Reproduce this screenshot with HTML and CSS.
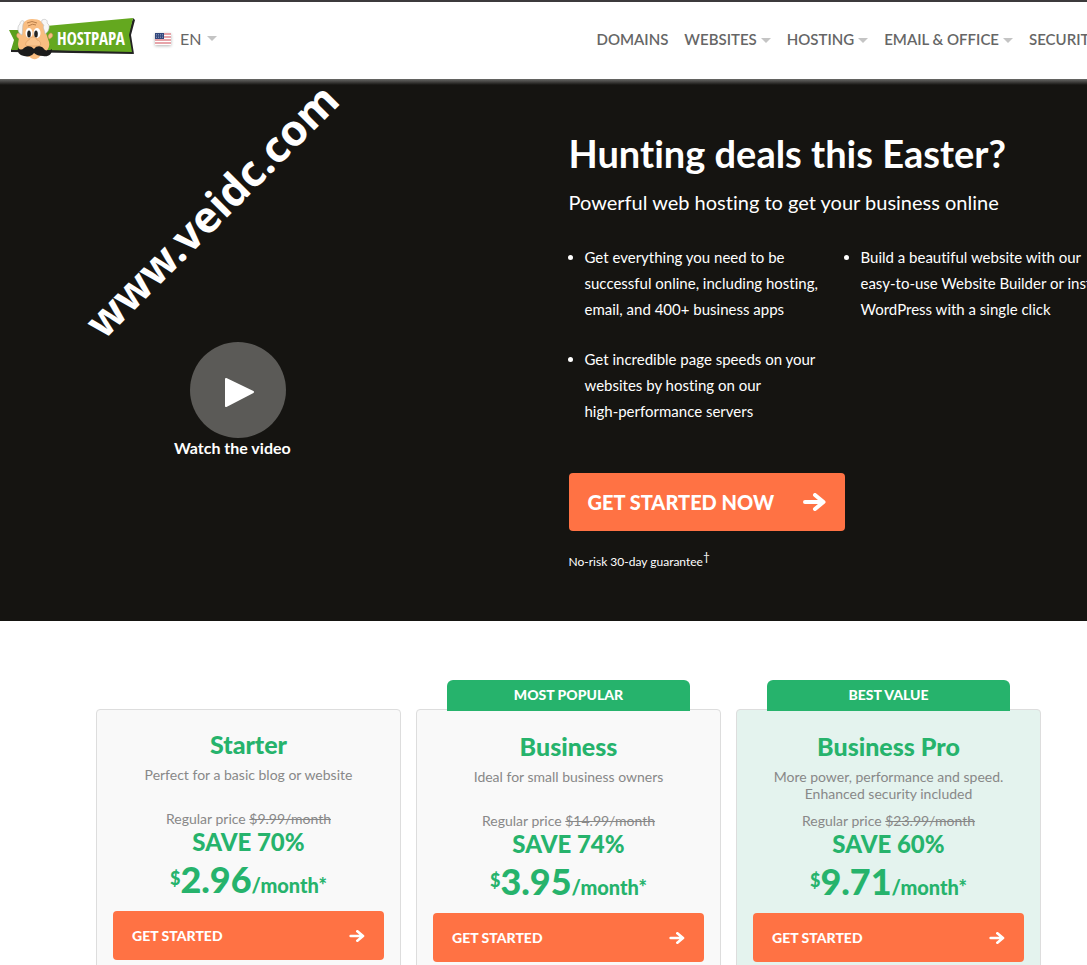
FILE: index.html
```html
<!DOCTYPE html>
<html lang="en">
<head>
    <meta charset="utf-8">
    <title>HostPapa</title>
    <link rel="stylesheet" href="styles.css">
</head>
<body>
    <header class="header">
        <a href="#" class="logo" aria-label="HostPapa">
            <svg width="128" height="44" viewBox="0 0 128 44">
                <!-- ribbon -->
                <polygon points="3,32 16,31 50,33 122,34 126,37 3,35" fill="#222"/>
                <polygon points="125,1 127,3 123,18 126,37 121,35 120,18" fill="#222"/>
                <polygon points="1,13 14,13 14,33 3,33 6,23" fill="#5c9f1c"/>
                <polygon points="38,9 125,1 121,18 124,35 38,33" fill="#64a81f"/>
                <text x="49" y="28" class="logo-text">HOSTPAPA</text>
                <!-- face -->
                <path d="M12 22c-4-1-4-5-2-6 1 0 2 1 3 3zM41 22c4-1 5-5 2-6-1 0-2 1-3 3z" fill="#f6bb83" stroke="#d08b52" stroke-width=".5"/>
                <path d="M12 14c1-8 6-12 12-12 8 0 12 3 13 11l4 12c2 7-6 13-9 14-2 4-8 4-10 1-6-1-12-7-12-13z" fill="#f9bd81"/>
                <path d="M14 18c-5-2-5-9-2-11 0-4 4-4 4-2-2 3-1 8-2 13zM34 3c4-2 6 1 5 3 4 2 2 9-2 11 0-4-3-6-1-9-2-1-3-3-2-5z" fill="#f7f7f7" stroke="#bbb" stroke-width=".6"/>
                <path d="M19 6q5-3 10 0M20 9q5-3 8-1" fill="none" stroke="#a96e3c" stroke-width=".8"/>
                <ellipse cx="21" cy="16" rx="3.500" ry="5" fill="#fff"/>
                <ellipse cx="29" cy="16" rx="3.500" ry="5" fill="#fff"/>
                <ellipse cx="21" cy="17" rx="1.800" ry="3.500" fill="#222"/>
                <ellipse cx="28" cy="17" rx="1.800" ry="3.500" fill="#222"/>
                <path d="M20 29c-5 0-1-6 1-6 1-4 7-4 8 0 3 0 6 6 1 6z" fill="#fbc58d" stroke="#d99a60" stroke-width=".6"/>
                <path d="M26 32c3-4 8-3 10 0 2 2 5 2 8 0 0 6-4 8-9 7-4 0-7-1-9-3-2 3-6 4-10 3-5-1-7-4-6-8 2 2 4 2 6 0 3-3 8-2 10 1z" fill="#1c1c1c"/>
            </svg>
        </a>
        <button class="lang">
            <svg class="flag" width="16" height="12" viewBox="0 0 16 12">
                <rect width="16" height="12" fill="#fff"/>
                <path d="M0 1h16M0 4h16M0 7h16M0 10h16" stroke="#cf4a55" stroke-width="1.200"/>
                <rect width="9" height="6" fill="#33487d"/>
                <path d="M1 1.500h7M1 3h7M1 4.500h7" stroke="#a9b4cf" stroke-width=".6" stroke-dasharray="1 1"/>
            </svg>
            EN
            <span class="caret"></span>
        </button>
        <nav class="nav">
            <a href="#">DOMAINS</a>
            <a href="#">WEBSITES<span class="caret"></span></a>
            <a href="#">HOSTING<span class="caret"></span></a>
            <a href="#">EMAIL &amp; OFFICE<span class="caret"></span></a>
            <a href="#">SECURITY<span class="caret"></span></a>
        </nav>
    </header>

    <section class="hero">
        <div class="watermark">www.veidc.com</div>
        <div class="hero-video">
            <button class="play">
                <svg width="96" height="96" viewBox="0 0 96 96">
                    <circle cx="48" cy="48" r="48" fill="#5b5a57"/>
                    <path d="M36 37L63 50 36 64z" fill="#fff" stroke="#fff" stroke-width="2" stroke-linejoin="round"/>
                </svg>
                <span>Watch the video</span>
            </button>
        </div>
        <div class="hero-content">
            <h1>Hunting deals this Easter?</h1>
            <p class="hero-sub">Powerful web hosting to get your business online</p>
            <ul class="hero-list">
                <li>Get everything you need to be successful online, including hosting, email, and 400+ business apps</li>
                <li>Build a beautiful website with our easy-to-use Website Builder or install WordPress with a single click</li>
                <li>Get incredible page speeds on your websites by hosting on our high&#8209;performance servers</li>
            </ul>
            <a href="#" class="btn btn-large">
                GET STARTED NOW
                <svg width="23" height="18" viewBox="0 0 23 18"><path d="M2 9h18M12 2l8.500 7-8.500 7" class="arrow"/></svg>
            </a>
            <p class="guarantee">No-risk 30-day guarantee<sup>†</sup></p>
        </div>
    </section>

    <section class="plans">
        <div class="plan">
            <h2>Starter</h2>
            <p class="plan-desc">Perfect for a basic blog or website</p>
            <p class="plan-regular">Regular price <s>$9.99/month</s></p>
            <p class="plan-save">SAVE 70%</p>
            <p class="plan-price"><span class="dollar">$</span><span class="amount">2.96</span>/month*</p>
            <a href="#" class="btn">
                GET STARTED
                <svg width="16" height="12" viewBox="0 0 23 18"><path d="M2 9h18M12 2l8.500 7-8.500 7" class="arrow"/></svg>
            </a>
        </div>
        <div class="plan">
            <div class="badge">MOST POPULAR</div>
            <h2>Business</h2>
            <p class="plan-desc">Ideal for small business owners</p>
            <p class="plan-regular">Regular price <s>$14.99/month</s></p>
            <p class="plan-save">SAVE 74%</p>
            <p class="plan-price"><span class="dollar">$</span><span class="amount">3.95</span>/month*</p>
            <a href="#" class="btn">
                GET STARTED
                <svg width="16" height="12" viewBox="0 0 23 18"><path d="M2 9h18M12 2l8.500 7-8.500 7" class="arrow"/></svg>
            </a>
        </div>
        <div class="plan plan-best">
            <div class="badge">BEST VALUE</div>
            <h2>Business Pro</h2>
            <p class="plan-desc">More power, performance and speed. Enhanced security included</p>
            <p class="plan-regular">Regular price <s>$23.99/month</s></p>
            <p class="plan-save">SAVE 60%</p>
            <p class="plan-price"><span class="dollar">$</span><span class="amount">9.71</span>/month*</p>
            <a href="#" class="btn">
                GET STARTED
                <svg width="16" height="12" viewBox="0 0 23 18"><path d="M2 9h18M12 2l8.500 7-8.500 7" class="arrow"/></svg>
            </a>
        </div>
    </section>
</body>
</html>
```
FILE: styles.css
```css
* {
    box-sizing: border-box;
}
html {
    overflow-x: hidden;
}
body {
    margin: 0;
    min-width: 1137px;
    font-family: Lato, "Liberation Sans", sans-serif;
    font-variant-ligatures: none;
    background-color: #fff;
}
h1, h2, p, ul {
    margin: 0;
    padding: 0;
}
a {
    color: inherit;
    text-decoration: none;
}
button {
    padding: 0;
    border: none;
    background: none;
    font-family: inherit;
    cursor: pointer;
}

/* header */
.header {
    display: flex;
    align-items: center;
    height: 79px;
    padding: 0 24px 4px 8px;
    border-top: 2px solid #3c3a3c;
}
.logo svg {
    display: block;
}
.logo-text {
    font-family: "Liberation Sans Narrow", "Open Sans Condensed", "Roboto Condensed", "DejaVu Sans Condensed", sans-serif;
    font-size: 17px;
    font-weight: bold;
    fill: #fff;
}
.lang {
    display: flex;
    align-items: center;
    margin-left: 19px;
    font-size: 16px;
    color: #666;
}
.flag {
    margin-right: 9px;
    box-shadow: 0 1px 3px rgba(0, 0, 0, 0.3);
}
.caret {
    display: inline-block;
    margin-left: 4px;
    border: 5px solid transparent;
    border-top-color: #c4c4c4;
    border-bottom: none;
    vertical-align: middle;
}
.lang .caret {
    margin-left: 6px;
}
.nav {
    display: flex;
    gap: 16px;
    margin-left: auto;
    font-size: 15px;
    font-weight: 600;
    color: #666;
    white-space: nowrap;
}

/* hero */
.hero {
    position: relative;
    display: grid;
    grid-template-columns: 1fr 1fr;
    height: 542px;
    color: #fff;
    background: linear-gradient(#6a6a68, #151411 6px);
}
.watermark {
    position: absolute;
    left: 108px;
    top: 222px;
    font-family: "Noto Sans", sans-serif;
    font-size: 43px;
    font-weight: bold;
    line-height: 44px;
    transform: rotate(-45deg);
    transform-origin: 0 100%;
}
.hero-video {
    padding: 263px 0 0 174px;
}
.play {
    display: flex;
    flex-direction: column;
    color: #fff;
    font-size: 16px;
    font-weight: bold;
    line-height: 20px;
}
.play svg {
    margin-left: 16px;
}
.hero-content {
    padding-top: 50px;
}
.hero-content h1 {
    font-size: 38px;
    line-height: 48px;
}
.hero-sub {
    margin-top: 12px;
    font-size: 20px;
    line-height: 26px;
}
.hero-list {
    display: grid;
    grid-template-columns: 236px 252px;
    gap: 24px 40px;
    margin-top: 29px;
    padding-left: 16px;
    font-size: 15px;
    line-height: 26px;
}
.btn {
    display: flex;
    align-items: center;
    justify-content: space-between;
    height: 49px;
    margin: 0 16px;
    padding: 0 19px;
    border-radius: 4px;
    background-color: #ff7244;
    color: #fff;
    font-size: 14px;
    font-weight: 900;
}
.btn-large {
    width: 276px;
    height: 58px;
    margin: 49px 0 0;
    font-size: 20px;
}
.arrow {
    fill: none;
    stroke: #fff;
    stroke-width: 4;
    stroke-linecap: round;
    stroke-linejoin: round;
}
.guarantee {
    margin-top: 21px;
    font-size: 12px;
    line-height: 20px;
}
.guarantee sup {
    font-size: 12px;
    line-height: 0;
}

/* pricing plans */
.plans {
    display: grid;
    grid-template-columns: repeat(3, 305px);
    justify-content: center;
    gap: 15px;
    padding: 88px 0 60px;
    text-align: center;
}
.plan {
    padding: 0 0 30px;
    border: 1px solid #ddd;
    border-radius: 4px;
    background-color: #f9f9f9;
    color: #26b36c;
}
.plan-best {
    background-color: #e4f3ee;
}
.badge {
    height: 31px;
    margin: -30px 30px 1px;
    border-radius: 6px 6px 0 0;
    background-color: #26b36c;
    color: #fff;
    font-size: 14px;
    font-weight: 900;
    line-height: 29px;
}
.plan h2 {
    padding-top: 19px;
    font-size: 25px;
    font-weight: 900;
    line-height: 30px;
}
.plan-desc {
    min-height: 34px;
    margin: 7px 30px 10px;
    color: #888;
    font-size: 14px;
    line-height: 17px;
}
.plan-regular {
    color: #888;
    font-size: 14px;
    line-height: 17px;
}
.plan-save {
    font-size: 24px;
    font-weight: 900;
    line-height: 30px;
}
.plan-price {
    height: 54px;
    font-size: 20px;
    font-weight: 900;
    line-height: 44px;
}
.amount {
    font-size: 36px;
}
.dollar {
    font-size: 18px;
    vertical-align: 8px;
    line-height: 0;
}
```
